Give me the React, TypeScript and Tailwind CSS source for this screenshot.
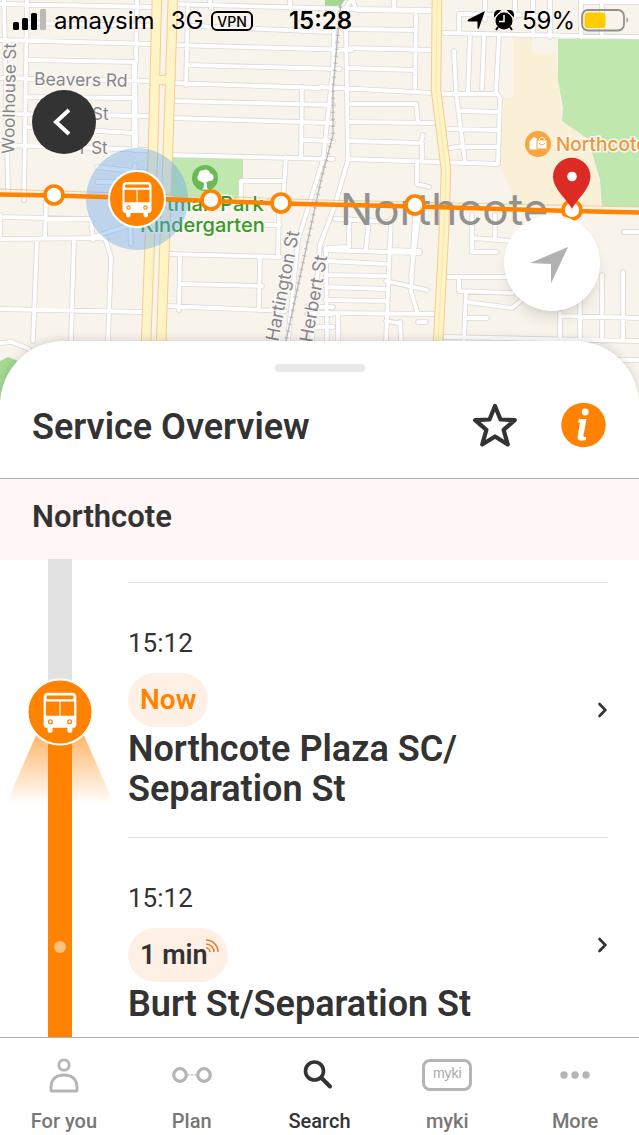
import React from "react";

const ROADS = [
  // north-west grid
  "M27 0L24 200", "M4 0L8 190", "M0 40L152 44", "M28 60L135 62 136 150", "M0 78L152 81", "M26 97L134 98", "M0 114L152 116",
  "M25 143V127L134 133", "M0 145L152 150", "M137 0L136 62", "M134 150L134 62", "M0 4L152 7", "M27 23L152 26",
  // middle north grid
  "M172 4L352 9 430 10", "M172 25L330 32", "M173 45L352 50", "M188 8L186 85", "M188 65L340 69", "M172 83L320 88", "M174 101L333 105",
  "M173 118L333 123", "M171 155L333 159", "M302 87L301 158", "M210 0L211 8", "M290 0V8", "M303 140L333 141", "M286 157L283 202", "M284 181H241V200",
  "M334 30L333 70 323 160 298 240 288 340", "M346 30L348 160 335 205 320 245 312 340",
  // northcote north
  "M346 8L352 -2 356 10 430 11", "M348 29L415 30", "M347 48L430 50", "M348 68L415 70", "M320 87L452 94", "M416 10L415 88", "M394 0V9",
  "M350 104H416L418 122", "M350 122L433 123", "M350 141L421 143 423 135", "M422 143V161", "M348 159L498 164", "M417 162V184L429 187",
  "M444 33L526 35 639 37", "M459 33V14L520 15", "M454 51L456 92 465 162", "M470 34L468 92", "M484 35L482 89", "M499 36L496 92 500 98 498 164", "M440 94L497 94",
  "M461 111L498 112", "M448 129L498 130", "M450 148L463 146", "M462 147L498 147", "M485 0V20", "M515 0V17", "M533 0V36", "M550 0V37", "M581 0V37", "M602 0V37", "M524 16H550", "M581 2H639",
  // south-west grid
  "M0 217L91 219 93 240", "M46 202L45 238", "M0 239L106 238", "M37 239L33 341", "M74 239L71 341", "M105 238L111 257 108 341", "M0 309L142 312", "M0 238V215", "M93 237L130 225 131 244",
  "M97 167L151 173", "M97 182H150", "M135 165L134 180", "M0 343L12 342 29 349",
  // kindergarten grid
  "M168 254L280 257", "M180 257L179 310", "M260 257L259 310", "M180 284L262 286", "M167 306L285 311", "M248 200L279 203 278 257", "M280 225H265",
  "M307 307H333", "M307 314H333", "M307 327H333",
  // southern grid
  "M335 219L390 222", "M349 219V247L326 248 327 340", "M369 220L366 249", "M325 250L420 253", "M326 261L386 264", "M326 275L386 276", "M326 287L386 289", "M326 300L386 301", "M320 313L436 314",
  "M391 219L386 341", "M338 313V341", "M415 214L411 292 418 314", "M419 214L415 245 411 277", "M386 281L427 290", "M390 250L420 251", "M400 322L401 341", "M386 321L398 323", "M418 322H426",
  "M472 215V252H497", "M472 238L512 241", "M495 215V239", "M448 277L515 277", "M459 278V291L513 293", "M466 292L464 340", "M467 302L512 308 523 299", "M466 318H487",
  "M445 337L639 341", "M560 313V341", "M560 316L639 318", "M602 275V341", "M623 272V341", "M580 300V341", "M624 232H639", "M620 360H639",
];

const STOPS: [number, number][] = [[54, 195], [211, 200], [281, 203], [415, 205], [572, 210]];

function BusGlyph() {
  return (
    <g>
      <path d="M-10.500-17h21q4 0 4 4v24q0 3-3 3h-23q-3 0-3-3v-24q0-4 4-4z" fill="#fff" />
      <path d="M-11 13h4.500v3.200a2.200 2.200 0 0 1-4.500 0zM6.500 13H11v3.200a2.200 2.200 0 0 1-4.500 0z" fill="#fff" />
      <rect x="-12" y="-14.500" width="24" height="3.300" rx="1.200" fill="#ff8200" />
      <path d="M-12.500-9.200h12v12.500h-12zM.5-9.200h12v12.500H.5z" fill="#ff8200" />
      <circle cx="-8.500" cy="8.600" r="1.700" fill="none" stroke="#ff8200" strokeWidth="1.100" />
      <circle cx="8.500" cy="8.600" r="1.700" fill="none" stroke="#ff8200" strokeWidth="1.100" />
    </g>
  );
}

function RouteMap() {
  return (
    <svg className="absolute inset-0 h-full w-full" viewBox="0 0 639 400" preserveAspectRatio="xMidYMin slice" role="img" aria-label="Map of Northcote">
      <rect width="639" height="400" fill="#f8f4ec" />
      <path d="M513 38H532V53H556L562 121 589 139 604 205H516L500 165 502 98H513z" fill="#f9f0d7" />
      <path d="M558 39H639V207H602L600 180 588 139 562 121 563 108 558 80z" fill="#bfe7ae" />
      <path d="M172 157H243V199H170z" fill="#bfe7ae" />
      <path d="M0 361L8 357 18 361 10 400H0zM325 0H345L340 7 325 8z" fill="#a5d992" />
      <g fill="none" strokeLinejoin="round" strokeLinecap="round">
        <path d={ROADS.join("")} stroke="#dcd9d8" strokeWidth="5.500" />
        <path d={ROADS.join("")} stroke="#fff" strokeWidth="3.800" />
        <path d="M341 0L333 88 333 135 321 180 286 341" stroke="#b9b7b7" strokeWidth="1.300" />
        <path d="M341 0L333 88 333 135 321 180 286 341" stroke="#b9b7b7" strokeWidth="4" strokeDasharray="1 6" strokeLinecap="butt" />
        <path d="M157-5L153 150 146 345M173-5L168 150 161 345M155 80H170M437-5L436 90 446 170 444 230 438 345" stroke="#f5cb91" strokeWidth="10.500" />
        <path d="M157-5L153 150 146 345M173-5L168 150 161 345M155 80H170M437-5L436 90 446 170 444 230 438 345" stroke="#fff4c6" strokeWidth="8.500" />
        <path d="M437 0L436 90 446 170 444 230 438 341" stroke="#f9e7ac" />
        <path d="M0 189L320 200 639 207" stroke="#f5cb91" />
      </g>
      <g fontFamily="Inter, sans-serif" fill="#86868a" stroke="#faf7f2" strokeWidth="3" paintOrder="stroke">
        <text x="34" y="85" fontSize="17.500" transform="rotate(1 34 85)">Beavers Rd</text>
        <text x="92" y="120" fontSize="17">St</text>
        <text x="80" y="154" fontSize="17">r St</text>
        <text x="14" y="154" fontSize="17" transform="rotate(-89 14 154)">Woolhouse St</text>
        <text x="278" y="342" fontSize="18" transform="rotate(-79 278 342)">Hartington St</text>
        <text x="312" y="343" fontSize="18" transform="rotate(-80 312 343)">Herbert St</text>
        <text x="340" y="225" fontSize="44" stroke="none" fill="#929190">Northcote</text>
        <text x="167" y="211" fontSize="20" fill="#349b26" fontWeight="500">tman Park</text>
        <text x="140" y="232" fontSize="20" fill="#349b26" fontWeight="500">Kindergarten</text>
        <text x="556" y="151" fontSize="19" fill="#f0953a" fontWeight="500">Northcote</text>
      </g>
      <circle cx="205" cy="178" r="13" fill="#6bba55" />
      <path d="M203.500 188l.5-5-4-2a3.500 3.500 0 0 1-1.500-6 4 4 0 0 1 5-4.500 4 4 0 0 1 6.500 3 3.700 3.700 0 0 1-.5 7.500l-3 1 .5 6 2 1.500h-7z" fill="#fff" />
      <circle cx="538" cy="144" r="13" fill="#faa53d" />
      <path d="M530 141h9v8h-9zM532 141v-2q2-3 4.500 0v2" fill="#fff" stroke="#fff" />
      <path d="M537 140h10v9h-10z" fill="#fff" stroke="#faa53d" />
      <path d="M539.500 140v-1.500q2.500-3 5 0v1.500" fill="none" stroke="#fff" />
      <path d="M539 143.500q3 3 6 0" fill="none" stroke="#faa53d" />
      <circle cx="137" cy="199" r="51" fill="#67a4e8" fillOpacity=".4" />
      <path d="M-100 192L0 194.500 54 195.500 136 198 211 201 281 203.500 415 206.500 572 211 740 215" fill="none" stroke="#ff8200" strokeWidth="4.500" />
      {STOPS.map(([x, y]) => (
        <circle key={x} cx={x} cy={y} r="9" fill="#fff" stroke="#ff8200" strokeWidth="3.600" />
      ))}
      <circle cx="137" cy="199" r="28" fill="#ff8200" stroke="#fff" strokeWidth="2" />
      <g transform="translate(137 199)"><BusGlyph /></g>
      <path d="M572 209C567 199 553 189 553 176.500a18.700 18.700 0 0 1 37.400 0C590.400 189 577 199 572 209z" fill="#dc2a25" />
      <circle cx="572" cy="176.500" r="4.800" fill="#fff" />
    </svg>
  );
}

function StatusBar() {
  return (
    <div className="relative grid h-[42px] grid-cols-[1fr_auto_1fr] items-center pl-3 pr-2.5 text-[24px] text-black">
      <div className="flex items-center">
        <svg className="mr-1.5 h-6 w-9" viewBox="0 0 36 24" aria-label="Signal strength">
          <rect x="1" y="13" width="6" height="8" rx="1.500" />
          <rect x="10" y="9" width="6" height="12" rx="1.500" />
          <rect x="19" y="4" width="6" height="17" rx="1.500" />
          <rect x="28" y="0" width="6" height="21" rx="1.500" fill="#bdbab6" />
        </svg>
        <span>amaysim</span>
        <span className="ml-4">3G</span>
        <span className="ml-2 flex h-5 items-center rounded-[6px] border-2 border-black px-1 text-[14px] font-medium">VPN</span>
      </div>
      <span className="font-semibold">15:28</span>
      <div className="flex items-center justify-end">
        <svg className="mr-2 h-6 w-5" viewBox="0 0 20 24" aria-label="Location in use">
          <path d="M19 2L13 19Q12 21 11.500 19V12.500H3Q0 12 3 10z" />
        </svg>
        <svg className="mr-2 h-6 w-5" viewBox="0 0 20 24" aria-label="Alarm set">
          <circle cx="10" cy="12" r="8.500" />
          <path d="M1 6Q1 2 5 2zM19 6Q19 2 15 2zM4 18L2 21M16 18L18 21" stroke="#000" strokeWidth="2" />
          <path d="M10 6V12.500H5" fill="none" stroke="#fff" strokeWidth="1.500" />
        </svg>
        <span>59%</span>
        <svg className="ml-1.5 h-6 w-12" viewBox="0 0 48 24" aria-label="Battery">
          <rect x="1" y="1" width="42" height="20.500" rx="6" fill="none" stroke="#929089" strokeWidth="1.800" />
          <rect x="3.500" y="3.500" width="21" height="15.500" rx="3.500" fill="#ffcc00" />
          <path d="M45.500 8q3 3 0 6z" fill="#929089" />
        </svg>
      </div>
    </div>
  );
}

function Chevron() {
  return (
    <svg className="h-4 w-3" viewBox="0 0 12 16" fill="none" stroke="#333" strokeWidth="2.600" strokeLinecap="round" aria-hidden="true">
      <path d="M3.500 2l5.800 6-5.800 6" />
    </svg>
  );
}

function StopRow({ time, name, children }: { time: string; name: string; children: React.ReactNode }) {
  return (
    <li className="border-t border-[#e2e2e2]">
      <a href="#stop" className="flex items-center gap-4">
        <div className="min-w-0 flex-1 pt-10 pb-7">
          <div className="text-[26px] leading-10">{time}</div>
          <div className="mt-2.5 flex">{children}</div>
          <div className="mt-0.5 max-w-[400px] text-[36px] leading-10 font-semibold">{name}</div>
        </div>
        <Chevron />
      </a>
    </li>
  );
}

function Tab({ label, active = false, children }: { label: string; active?: boolean; children: React.ReactNode }) {
  return (
    <a href="#tab" aria-current={active ? "page" : undefined} className={active ? "flex flex-col items-center pt-[15px] text-[#333]" : "flex flex-col items-center pt-[15px] text-[#777]"}>
      <span className="flex h-11 items-center">{children}</span>
      <span className="mt-2 text-[20px] leading-8 font-medium">{label}</span>
    </a>
  );
}

export default function App() {
  return (
    <div className="flex h-screen flex-col overflow-hidden bg-white font-['Roboto',sans-serif] text-[#333]">
      <header className="relative h-[341px] shrink-0 font-['Inter',sans-serif]">
        <div className="absolute inset-x-0 top-0 h-[400px] overflow-hidden">
          <RouteMap />
        </div>
        <StatusBar />
        <button type="button" aria-label="Back" className="absolute top-[90px] left-8 flex size-16 items-center justify-center rounded-full bg-[#333]">
          <svg className="size-8" viewBox="0 0 32 32" fill="none" stroke="#fff" strokeWidth="4" aria-hidden="true">
            <path d="M21 4L8 16l13 12" />
          </svg>
        </button>
        <button type="button" aria-label="Centre on my location" className="absolute top-[215px] right-[39px] flex size-24 items-center justify-center rounded-full bg-white shadow-lg">
          <svg className="size-10 overflow-visible" viewBox="0 0 40 40" fill="#b2b2b2" aria-hidden="true">
            <path d="M36 4L19 40.500V21L-2 20z" />
          </svg>
        </button>
      </header>

      <main className="relative flex min-h-0 flex-1 flex-col rounded-t-[64px] bg-white shadow-[0_-2px_8px_rgba(0,0,0,0.12)]">
        <div className="mx-auto mt-[23px] h-2 w-[90px] shrink-0 rounded-full bg-[#e8e8e8]" />
        <div className="flex h-[107px] shrink-0 items-center gap-11 border-b border-[#b0b0b0] px-8">
          <h1 className="flex-1 pt-1 text-[36px] leading-10 font-semibold">Service Overview</h1>
          <button type="button" aria-label="Add to favourites">
            <svg className="size-11" viewBox="0 0 44 44" fill="none" stroke="#333" strokeWidth="4.200" strokeLinejoin="round" aria-hidden="true">
              <path d="M22 3l5.500 13.500 14.300.7-11.200 9.600 4.200 14.700L22 33.500 9.200 41.500l4.200-14.700L2.200 17.200l14.300-.7z" />
            </svg>
          </button>
          <button type="button" aria-label="Service information">
            <svg className="size-[46px]" viewBox="0 0 46 46" aria-hidden="true">
              <circle cx="22.500" cy="23" r="22.200" fill="#ff8200" />
              <circle cx="24.200" cy="10" r="3.400" fill="#fff" />
              <path d="M18 17h7.500l-3 16q-.5 2.200 2.500 2v3q-9.500 2.500-8.300-4l2.300-13.500H17z" fill="#fff" />
            </svg>
          </button>
        </div>
        <h2 className="h-20 shrink-0 bg-[#fff6f5] px-8 pt-4.5 text-[31px] leading-10 font-semibold">Northcote</h2>

        <div className="flex min-h-0 flex-1 overflow-hidden">
          <div className="relative flex w-32 shrink-0 flex-col pl-12">
            <div className="h-[153px] w-6 shrink-0 bg-[#e2e2e2]" />
            <div className="flex w-6 flex-1 justify-center bg-[#ff8200] pt-[229px]">
              <span className="size-3 rounded-full bg-[#ffc180]" />
            </div>
            <svg className="absolute top-[119px] left-0 h-[130px] w-[120px]" viewBox="0 0 120 130" aria-label="Bus location">
              <defs>
                <linearGradient id="beam" x1="0" y1="0" x2="0" y2="1">
                  <stop offset="0" stopColor="#ff8200" stopOpacity=".6" />
                  <stop offset="1" stopColor="#ff8200" stopOpacity="0" />
                </linearGradient>
              </defs>
              <path d="M37 55H83L114 126H6z" fill="url(#beam)" />
              <circle cx="60" cy="34" r="32.500" fill="#ff8200" stroke="#fff" strokeWidth="2" />
              <g transform="translate(60 34) scale(1.130)"><BusGlyph /></g>
            </svg>
          </div>
          <ol className="min-w-0 flex-1 pt-[23px] pr-[31px]">
            <StopRow time="15:12" name="Northcote Plaza SC/ Separation St">
              <span className="rounded-full bg-[#fff0e6] px-3 text-[28px] leading-[54px] font-semibold text-[#ff8200]">Now</span>
            </StopRow>
            <StopRow time="15:12" name="Burt St/Separation St">
              <span className="flex rounded-full bg-[#fff0e6] pr-2 pl-3 text-[27px] leading-[54px] font-semibold">
                1 min
                <svg className="mt-2.5 -ml-0.5 size-3.5" viewBox="0 0 14 14" fill="none" stroke="#e87722" strokeWidth="1.500" aria-label="Live">
                  <path d="M0 2A12 12 0 0 1 12 14M0 6a8 8 0 0 1 8 8M0 10a4 4 0 0 1 4 4" />
                </svg>
              </span>
            </StopRow>
          </ol>
        </div>
      </main>

      <nav className="relative grid h-[98px] shrink-0 grid-cols-5 border-t border-[#b0b0b0] bg-white" aria-label="Main">
        <Tab label="For you">
          <svg className="h-9 w-8" viewBox="0 0 32 36" fill="none" stroke="#b5b5b5" strokeWidth="2.800" strokeLinejoin="round" aria-hidden="true">
            <circle cx="16" cy="8" r="5.200" />
            <path d="M3 34V31C3 22 8 18 16 18S29 22 29 31V34z" />
          </svg>
        </Tab>
        <Tab label="Plan">
          <svg className="h-4 w-10" viewBox="0 0 40 16" fill="none" stroke="#b5b5b5" strokeWidth="3.200" aria-hidden="true">
            <circle cx="8" cy="8" r="6.300" />
            <circle cx="32" cy="8" r="6.300" />
            <path d="M16 8h8" strokeWidth="1.500" strokeDasharray="1.500 1.750" />
          </svg>
        </Tab>
        <Tab label="Search" active>
          <svg className="size-8" viewBox="0 0 32 32" fill="none" stroke="#333" strokeWidth="3.600" strokeLinecap="round" aria-hidden="true">
            <circle cx="11.500" cy="12" r="9" />
            <path d="M18.500 19L27 27.500" strokeWidth="4" />
          </svg>
        </Tab>
        <Tab label="myki">
          <span className="flex h-8 w-[50px] items-center justify-center rounded-lg border-3 border-[#b5b5b5] pb-1 font-['Liberation_Sans',sans-serif] text-[14px] text-[#a8a8a8]">myki</span>
        </Tab>
        <Tab label="More">
          <svg className="h-2 w-8" viewBox="0 0 32 8" fill="#b5b5b5" aria-hidden="true">
            <circle cx="5" cy="4" r="3.700" />
            <circle cx="16" cy="4" r="3.700" />
            <circle cx="27" cy="4" r="3.700" />
          </svg>
        </Tab>
      </nav>
    </div>
  );
}
